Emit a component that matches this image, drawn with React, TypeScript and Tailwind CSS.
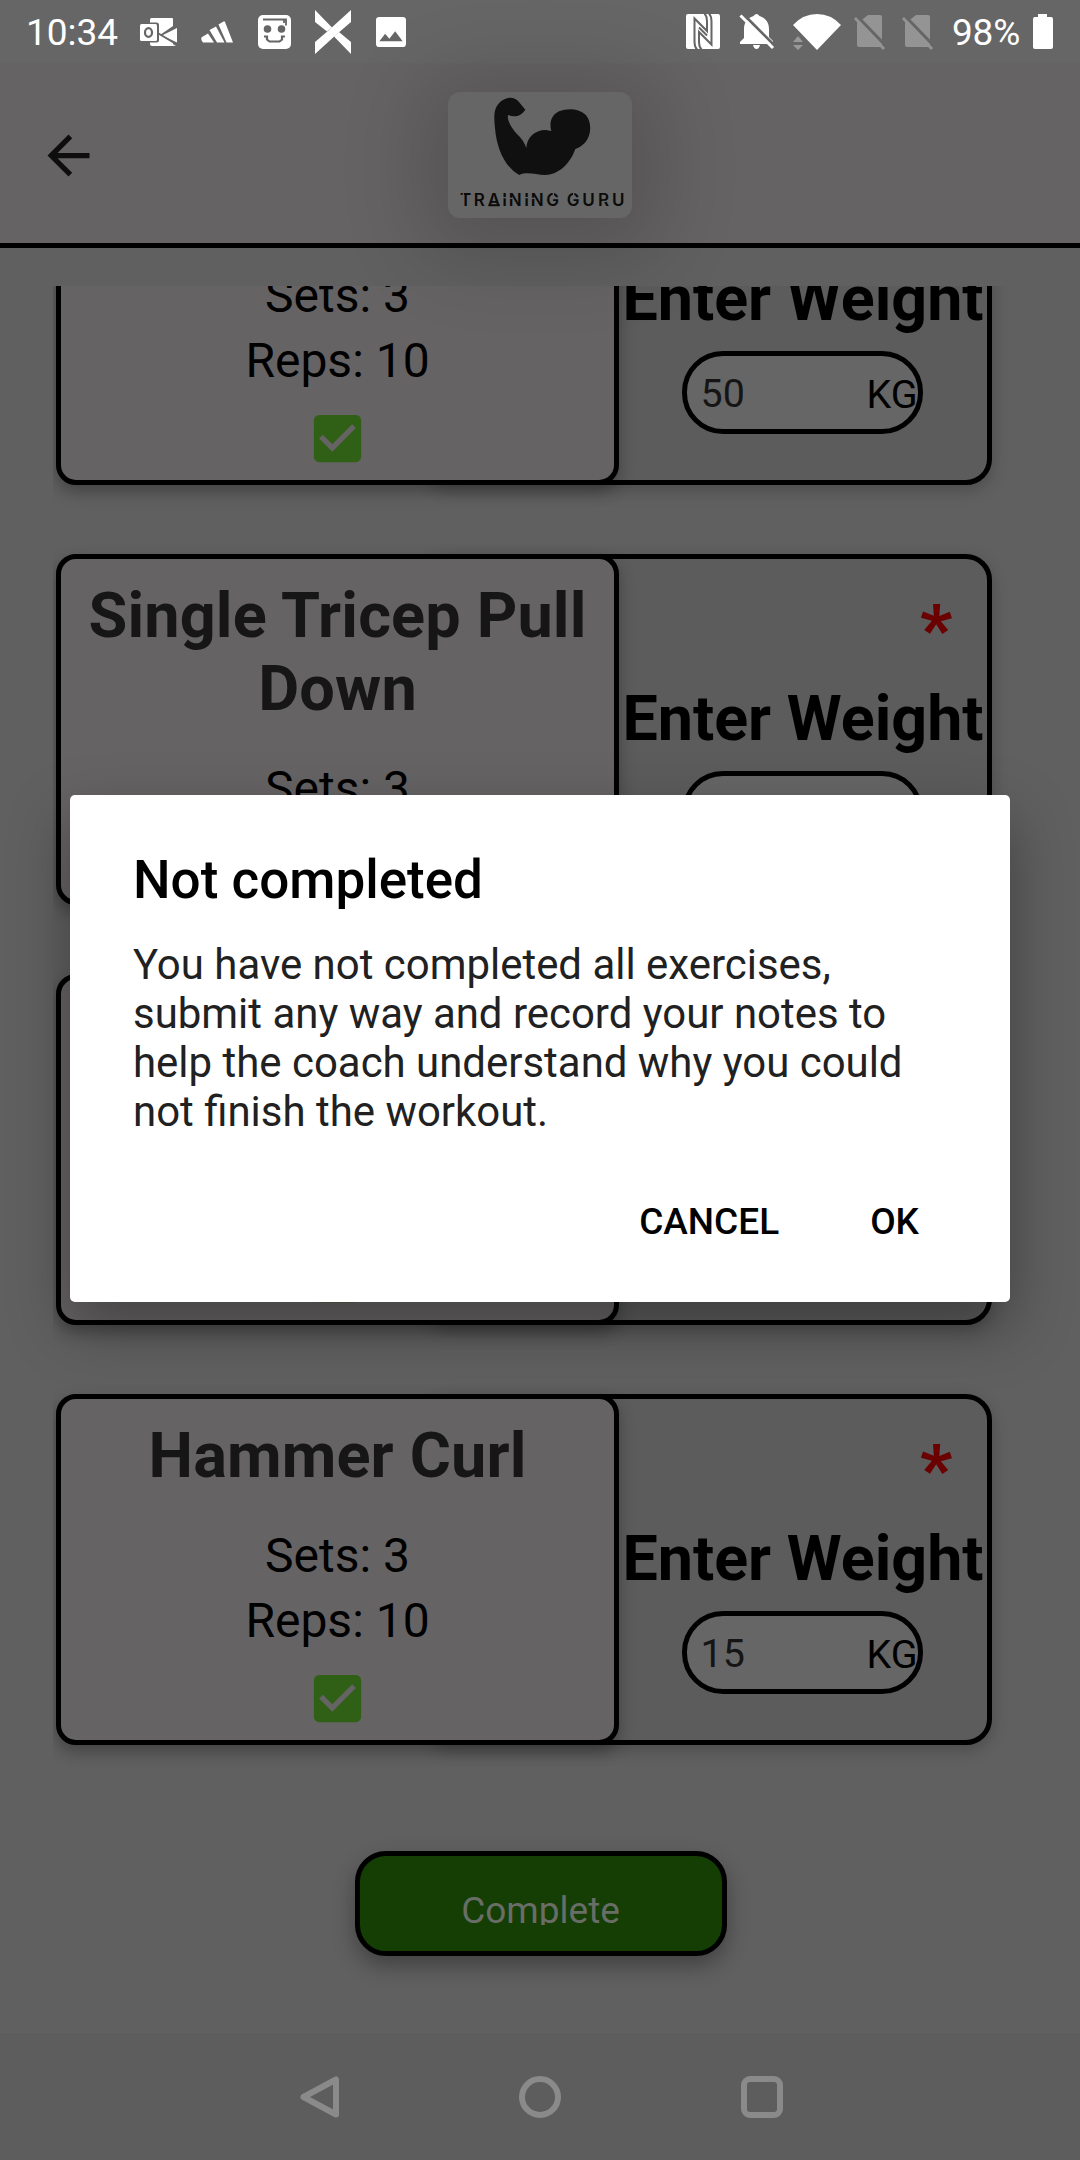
import React from "react";

type Exercise = { name: string; sets: number; reps: number; weight: string };

const exercises: Exercise[] = [
  { name: "Bicep Curl", sets: 3, reps: 10, weight: "50" },
  { name: "Single Tricep Pull Down", sets: 3, reps: 10, weight: "20" },
  { name: "Shoulder Press", sets: 3, reps: 10, weight: "20" },
  { name: "Hammer Curl", sets: 3, reps: 10, weight: "15" },
];

function StatusBar() {
  return (
    <div className="flex h-[63px] shrink-0 items-center bg-[#666666] text-[37px] leading-[44px] text-white">
      <span className="ml-[26px] w-[114px] translate-y-[1px]">10:34</span>
      {/* mail */}
      <svg className="h-[30px] w-[38px]" viewBox="0 0 38 30">
        <path d="M10 2.500Q10 1 11.500 1H32q1 0 1 1v26q0 1-1 1H12q-2 0-2-2z" fill="#fff" />
        <path d="M33 9 20 18 33 25v5h5V7z" fill="#666" />
        <path d="M22 18.500 37 11v14.500zM30 26l6 2.500-3 .5h-4z" fill="#fff" />
        <path d="M16 15 36 27" stroke="#666" strokeWidth="2" />
        <rect x="-1.500" y="5.500" width="20.500" height="20" rx="2.500" fill="#666" />
        <rect x="0" y="7" width="17" height="17" rx="1.500" fill="#fff" />
        <ellipse cx="8.500" cy="15.500" rx="3.500" ry="4.300" fill="none" stroke="#666" strokeWidth="2.200" />
      </svg>
      {/* three stripes */}
      <svg className="ml-[23px] h-[22px] w-[32px]" viewBox="0 0 32 22" fill="#fff">
        <path d="M17.500 3.500 22.500.5q1-.5 1.500.5L32 21.500h-6.500zM8.500 9l6.500-3.500 8.500 16h-7.500zM1 16l6-3.500 6 9H2Q-1 18 1 16z" />
      </svg>
      {/* smiling square */}
      <svg className="ml-[25px] h-[34px] w-[33px]" viewBox="0 0 33 34">
        <rect width="33" height="34" rx="5" fill="#fff" />
        <g fill="none" stroke="#666" strokeWidth="1.800">
          <path d="M5 4.500h23v6M26 5v3" />
          <path d="M6 21.500h3v3l2.500 2h10l2.500-2v-3h3" strokeWidth="2.200" />
        </g>
        <circle cx="9.500" cy="14" r="3.800" fill="#666" />
        <circle cx="23.500" cy="14" r="3.800" fill="#666" />
      </svg>
      {/* crossed blades */}
      <svg className="ml-[24px] h-[44px] w-[36px]" viewBox="0 0 36 44" fill="#fff">
        <path d="M36 0v12L22 24 0 44V32L14 20z" />
        <path d="M0 0 17 17.500 12 21.500 0 12zM36 44V32L24 22l-5 4.500z" />
      </svg>
      {/* picture */}
      <svg className="ml-[25px] h-[30px] w-[30px]" viewBox="3 3 18 18" fill="#fff">
        <path d="M21 19V5a2 2 0 0 0-2-2H5a2 2 0 0 0-2 2v14a2 2 0 0 0 2 2h14a2 2 0 0 0 2-2zM8.500 13l2.500 3 3.500-4.500 4.500 6H5z" />
      </svg>
      {/* nfc */}
      <svg className="ml-[280px] h-[35px] w-[34px]" viewBox="0 0 34 35">
        <rect width="34" height="35" rx="2" fill="#fff" />
        <g fill="none" stroke="#666" strokeWidth="2">
          <path d="M11 35.500Q8.500 33 8.500 28V4.500L21 17V7Q21 2 18.500-.5" />
          <path d="M23-.5Q25.500 2 25.500 7v23.500L13 18v10q0 5 2.500 7.500" />
          <path d="M13 13.500 21 21.500" />
        </g>
      </svg>
      {/* muted bell */}
      <svg className="ml-[19px] h-[36px] w-[36px]" viewBox="0 0 36 36">
        <path d="M14.500 2q3-4 6 0C27 4 30 9 30 15v8l4 4v3H1v-2l4-4v-9C5 9 8 4 14.500 2zM14 31h7q-1 4-3.500 4T14 31z" fill="#fff" />
        <path d="M4 0 36 32" stroke="#666" strokeWidth="3" />
        <path d="M1.500 1.500 34 34" stroke="#fff" strokeWidth="3" />
      </svg>
      {/* wifi */}
      <svg className="ml-[18px] h-[36px] w-[48px]" viewBox="0 0 48 36">
        <path d="M0 11Q10 0 24 0t24 11L24 36z" fill="#fff" />
        <path d="M0 28h10l-5-6zM0 31h10l-5 5z" fill="#999" />
      </svg>
      {/* empty sim slots */}
      {[0, 1].map((i) => (
        <svg key={i} className="ml-[13px] h-[36px] w-[32px] [&+svg]:ml-[16px]" viewBox="0 0 32 36">
          <path d="M9 5 14 1h12q2 0 2 2v28q0 2-2 2H5q-2 0-2-2V9z" fill="#949494" />
          <path d="M3 2 32 32" stroke="#666" strokeWidth="3" />
          <path d="M1 4 30 35" stroke="#949494" strokeWidth="2.800" />
        </svg>
      ))}
      <span className="ml-[18px] w-[70px] translate-y-[1px] tracking-[-0.2px]">98%</span>
      <svg className="ml-[11px] h-[35px] w-[20px]" viewBox="0 0 20 35" fill="#fff">
        <path d="M5 0h9v3h4q2 0 2 2v28q0 2-2 2H2q-2 0-2-2V5q0-2 2-2h3z" />
      </svg>
    </div>
  );
}

function Logo() {
  return (
    <div className="mt-[3px] h-[126px] w-[184px] overflow-hidden rounded-[12px] bg-[#666666] shadow-[0_12px_80px_28px_rgba(0,0,0,0.16)]">
      <svg className="h-[126px] w-[184px]" viewBox="144 96 552 378">
        <path
          fill="#101010"
          d="M358 345C312 320 290 262 285 205C281 165 281 143 303 124C324 108 344 112 355 124L376 149C364 167 345 174 325 165C319 174 331 200 348 219C364 234 375 250 379 264C380 233 405 209 438 210L454 213C447 188 454 165 477 154C502 144 536 145 554 162C574 180 575 215 562 238C554 253 540 262 526 267C510 312 476 344 435 345C408 345 382 334 358 345Z"
        />
        <text
          x="180 221 263 307 326 373 392 439 482 500 547 594 636"
          y="439"
          fontFamily="Inter"
          fontWeight="600"
          fontSize="51"
          fill="#0b0b0b"
        >
          TRAINING GURU
        </text>
        {/* base of the triangular A and the stencil breaks */}
        <path d="M266 436h33" stroke="#0b0b0b" strokeWidth="6" />
        <path d="M305 413h14M327 415h12M371 413h14M393 415h12M190 400v9M460 398v10M521 398v10M608 424h12" stroke="#666" strokeWidth="4" />
      </svg>
    </div>
  );
}

function Header() {
  return (
    <header className="relative z-20 flex h-[185px] shrink-0 items-center justify-center border-b-[5px] border-black bg-[#666364]">
      <svg className="absolute left-[37px] top-[61px] h-[63px] w-[63px]" viewBox="0 0 24 24" fill="#0e0e0e">
        <path d="M20 11H7.830l5.590-5.590L12 4l-8 8 8 8 1.410-1.410L7.830 13H20z" />
      </svg>
      <Logo />
    </header>
  );
}

function ExerciseCard({ name, sets, reps, weight }: Exercise) {
  return (
    <div className="flex h-[351px] shrink-0">
      <div className="z-10 flex w-[563px] flex-col items-center rounded-[20px] border-[5px] border-black bg-[#666364] px-[20px] pt-[20px] text-center text-[48px] leading-[65px] text-black shadow-[0_7px_16px_rgba(0,0,0,0.3)]">
        <h2 className="text-[63px] font-bold leading-[73px] tracking-[0.15px] text-[#161616]">{name}</h2>
        <p className="mt-[31px]">Sets: {sets}</p>
        <p>Reps: {reps}</p>
        <svg className="mt-[14px] h-[63px] w-[63px] shrink-0" viewBox="0 0 24 24" fill="#2f6016">
          <path d="M19 3H5a2 2 0 0 0-2 2v14a2 2 0 0 0 2 2h14a2 2 0 0 0 2-2V5a2 2 0 0 0-2-2zm-9 14-5-5 1.410-1.410L10 14.170l7.590-7.590L19 8z" />
        </svg>
      </div>
      <div className="-ml-[194px] flex w-[567px] flex-col items-center rounded-[26px] border-[5px] border-black bg-[#5c5c5c] pl-[189px] pt-[30px] shadow-[0_5px_16px_rgba(0,0,0,0.22)]">
        <span className="mr-[35px] translate-y-[4px] self-end text-[69px] font-black leading-[74px] text-[#6a0000]">*</span>
        <h3 className="mt-[19px] whitespace-nowrap text-[62.800px] font-bold leading-[74px] text-black">Enter Weight</h3>
        <div className="mr-[2px] mt-[15px] flex h-[83px] w-[241px] shrink-0 items-center justify-between rounded-[41px] border-[5px] border-black bg-[#666666] pl-[14px] pr-[0px] text-[39.400px] leading-[46px]">
          <span className="translate-y-[1px] text-[#151515]">{weight}</span>
          <span className="translate-y-[2px] text-black">KG</span>
        </div>
      </div>
    </div>
  );
}

function NavBar() {
  return (
    <nav className="flex h-[127px] shrink-0 items-center justify-between bg-[#5d5d5d] pl-[300px] pr-[297px]">
      <svg className="h-[42px] w-[39px]" viewBox="0 0 39 42" fill="none" stroke="#8a8a8a" strokeWidth="6" strokeLinejoin="round">
        <path d="M3.500 21 36 3.500v35z" />
      </svg>
      <span className="h-[42px] w-[42px] rounded-full border-[6px] border-[#8a8a8a]" />
      <span className="h-[42px] w-[42px] rounded-[9px] border-[6px] border-[#8a8a8a]" />
    </nav>
  );
}

function Dialog() {
  return (
    <div className="absolute inset-x-0 bottom-[126px] top-[63px] z-30 flex items-center justify-center">
      <div className="flex h-[507px] w-[940px] flex-col rounded-[5px] bg-white px-[63px] pt-[54px] shadow-[0_24px_60px_rgba(0,0,0,0.34)]">
        <h1 className="text-[53px] font-medium leading-[62px] text-black">Not completed</h1>
        <p className="mt-[29px] text-[41.950px] leading-[49px] text-[#212121]">
          You have not completed all exercises,
          <br />
          submit any way and record your notes to
          <br />
          help the coach understand why you could
          <br />
          not finish the workout.
        </p>
        <div className="mt-[64px] flex justify-end gap-[91px] pr-[28px] text-[37px] font-medium leading-[44px] text-black">
          <button>CANCEL</button>
          <button>OK</button>
        </div>
      </div>
    </div>
  );
}

export default function App() {
  return (
    <div className="relative flex h-[2160px] w-[1080px] flex-col overflow-hidden bg-[#606060] font-['Roboto',sans-serif]">
      <StatusBar />
      <Header />
      <main className="ml-[53px] mt-[38px] h-[1485px] shrink-0 overflow-hidden pl-[3px]">
        <div className="-mt-[152px] flex flex-col gap-[69px]">
          {exercises.map((e) => (
            <ExerciseCard key={e.name} {...e} />
          ))}
        </div>
      </main>
      <div className="flex flex-1 items-start justify-center pl-[2px] pt-[80px]">
        <button className="flex h-[105px] w-[372px] items-start justify-center rounded-[31px] border-[5px] border-black bg-[#143e04] pr-[1px] pt-[32px] text-[37px] leading-[46px] text-[#696d67] shadow-[0_10px_22px_rgba(0,0,0,0.32)]">
          <span className="h-[37px] overflow-hidden">Complete</span>
        </button>
      </div>
      <NavBar />
      <Dialog />
    </div>
  );
}
